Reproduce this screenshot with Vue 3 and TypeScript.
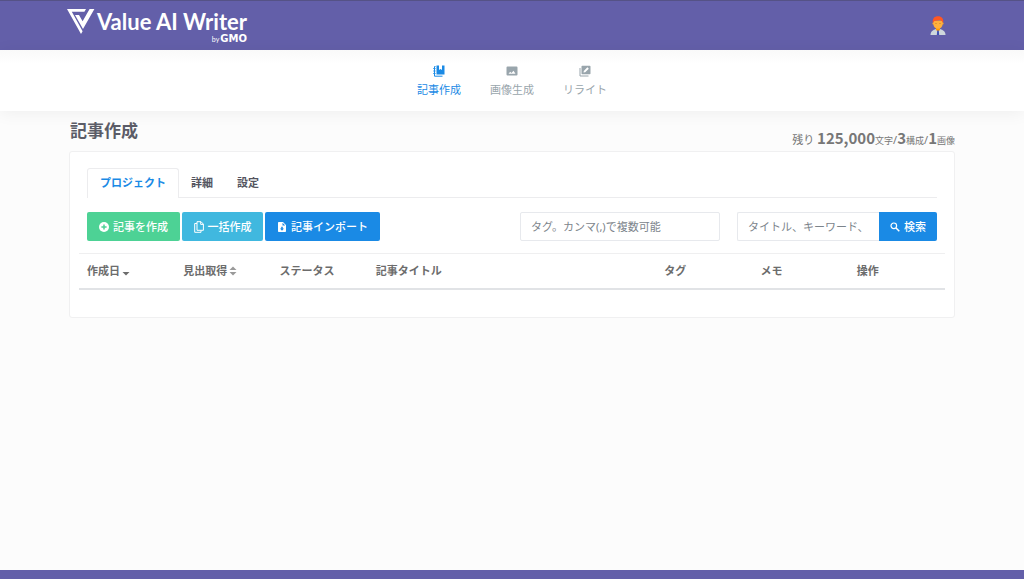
<script setup lang="ts">
import { ref } from 'vue'

interface Column {
  label: string
  span: number
  sort?: 'desc' | 'both'
}

const navItems = ['記事作成', '画像生成', 'リライト']
const tabs = ['プロジェクト', '詳細', '設定']
const columns: Column[] = [
  { label: '作成日', span: 1, sort: 'desc' },
  { label: '見出取得', span: 1, sort: 'both' },
  { label: 'ステータス', span: 1 },
  { label: '記事タイトル', span: 3 },
  { label: 'タグ', span: 1 },
  { label: 'メモ', span: 1 },
  { label: '操作', span: 1 },
]
const activeNav = ref(0)
const activeTab = ref(0)
const tagQuery = ref('')
const titleQuery = ref('')
</script>

<template>
  <div class="page">
    <header class="topbar">
      <div class="container topbar-inner">
        <a class="brand" href="#">
          <svg class="brand-mark" viewBox="0 0 28 25" aria-hidden="true">
            <path d="M0 0H19L17.4 2.8H4.8L15.6 22.2L14 25Z" fill="#fff" />
            <path d="M8 6H12L15.6 12.2L22.6 0H27.4L16 20Z" fill="#fff" />
          </svg>
          <span class="brand-text">
            <span class="brand-name">Value AI Writer</span>
            <span class="brand-sub">by<b>GMO</b></span>
          </span>
        </a>
        <button class="avatar" type="button" aria-label="アカウント">
          <svg viewBox="0 0 16 20" aria-hidden="true">
            <path d="M0.5 19C0.5 15.5 3 14 6 13H10C13 14 15.5 15.5 15.5 19Z" fill="#cfd8dc" />
            <path d="M6 11H10V14L8 15.5L6 14Z" fill="#ff9800" />
            <path d="M7.2 14.5H8.8L9.2 19H6.8Z" fill="#3f51b5" />
            <circle cx="3.4" cy="7.4" r="1" fill="#ffa726" />
            <circle cx="12.6" cy="7.4" r="1" fill="#ffa726" />
            <path d="M3.4 4.5H12.6V8C12.6 11 10.6 12.8 8 12.8S3.4 11 3.4 8Z" fill="#ffb03c" />
            <path d="M2.8 6.8C2.4 2.3 4.6 0.3 8 0.3C11.8 0.3 13.7 2.6 13.2 6.8L12 5.2L10 4L4.4 5Z" fill="#ff5722" />
            <circle cx="6" cy="7.5" r="0.5" fill="#b0702a" />
            <circle cx="10" cy="7.5" r="0.5" fill="#b0702a" />
          </svg>
        </button>
      </div>
    </header>

    <nav class="mainnav">
      <a
        v-for="(item, i) in navItems"
        :key="item"
        href="#"
        :class="{ active: activeNav === i }"
        @click.prevent="activeNav = i"
      >
        <svg v-if="i === 0" viewBox="0 0 12 12" aria-hidden="true">
          <path d="M3.5 0.5H6V5L7.5 4L9 5V0.5H11.5V9.5H3.5Z" fill="currentColor" />
          <path d="M2.5 1.5H1.5V11.2H9.5M0.3 3.5H2.5M0.3 6H2.5M0.3 8.5H2.5" fill="none" stroke="currentColor" />
        </svg>
        <svg v-else-if="i === 1" viewBox="0 0 12 12" aria-hidden="true">
          <path
            fill-rule="evenodd"
            d="M1.5 1.5H10.5Q11.5 1.5 11.5 2.5V9.5Q11.5 10.5 10.5 10.5H1.5Q0.5 10.5 0.5 9.5V2.5Q0.5 1.5 1.5 1.5ZM2.5 8.8H9.5L7.5 5.8L5.5 8L4.2 6.7Z"
            fill="currentColor"
          />
        </svg>
        <svg v-else viewBox="0 0 12 12" aria-hidden="true">
          <path
            fill-rule="evenodd"
            d="M3.3 0.8H10.7Q11.5 0.8 11.5 1.6V8.4Q11.5 9.2 10.7 9.2H3.3Q2.5 9.2 2.5 8.4V1.6Q2.5 0.8 3.3 0.8ZM4.5 7.6L6.2 7.3L9.8 3.7L8.4 2.3L4.8 5.9Z"
            fill="currentColor"
          />
          <path d="M1 3V11H9.5" fill="none" stroke="currentColor" />
        </svg>
        <span>{{ item }}</span>
      </a>
    </nav>

    <main class="container main">
      <div class="heading">
        <h1>記事作成</h1>
        <p class="quota">
          残り <b>125,000</b><small>文字</small>/<b>3</b><small>構成</small>/<b>1</b><small>画像</small>
        </p>
      </div>

      <section class="card">
        <div class="tabs" role="tablist">
          <button
            v-for="(tab, i) in tabs"
            :key="tab"
            type="button"
            role="tab"
            :aria-selected="activeTab === i"
            :class="{ active: activeTab === i }"
            @click="activeTab = i"
          >
            {{ tab }}
          </button>
        </div>

        <div class="toolbar">
          <button class="btn green" type="button">
            <svg viewBox="0 0 10 10" aria-hidden="true">
              <circle cx="5" cy="5" r="5" fill="#fff" />
              <path d="M5 2.4V7.6M2.4 5H7.6" stroke="#4dd295" stroke-width="1.5" />
            </svg>
            記事を作成
          </button>
          <button class="btn cyan" type="button">
            <svg class="tall" viewBox="0 0 10 12" aria-hidden="true">
              <path
                d="M3 0.7H7L9.4 3.1V9.3H3ZM6.7 0.7V3.4H9.4M3 2.5H0.7V11.3H7V9.5"
                fill="none"
                stroke="#fff"
              />
            </svg>
            一括作成
          </button>
          <button class="btn blue" type="button">
            <svg viewBox="0 0 10 10" aria-hidden="true">
              <path
                fill-rule="evenodd"
                d="M1.8 0H6L9 3V9.2Q9 10 8.2 10H1.8Q1 10 1 9.2V0.8Q1 0 1.8 0ZM5.5 0.8V3.5H8.2ZM4.2 4.7V6.5H3L5 8.7L7 6.5H5.8V4.7Z"
                fill="#fff"
              />
            </svg>
            記事インポート
          </button>

          <form class="filters" @submit.prevent>
            <input
              v-model="tagQuery"
              class="tag-input"
              type="text"
              aria-label="タグ"
              placeholder="タグ。カンマ(,)で複数可能"
            />
            <div class="search">
              <input
                v-model="titleQuery"
                type="text"
                aria-label="タイトル、キーワード"
                placeholder="タイトル、キーワード、"
              />
              <button class="btn blue" type="submit">
                <svg viewBox="0 0 10 10" aria-hidden="true">
                  <circle cx="3.8" cy="3.8" r="2.8" fill="none" stroke="#fff" stroke-width="1.2" />
                  <path d="M6 6L9.3 9.3" stroke="#fff" stroke-width="1.5" />
                </svg>
                検索
              </button>
            </div>
          </form>
        </div>

        <table>
          <colgroup>
            <col v-for="c in columns" :key="c.label" :class="{ wide: c.span > 1 }" />
          </colgroup>
          <thead>
            <tr>
              <th v-for="c in columns" :key="c.label" scope="col">
                {{ c.label }}<svg v-if="c.sort" viewBox="0 0 8 10" aria-hidden="true">
                  <path v-if="c.sort === 'both'" d="M0.5 4L4 0.5L7.5 4Z" fill="#999" />
                  <path
                    d="M0.5 6L4 9.5L7.5 6Z"
                    :fill="c.sort === 'both' ? '#999' : '#6c6c6c'"
                  />
                </svg>
              </th>
            </tr>
          </thead>
        </table>
      </section>
    </main>

    <footer class="footer"></footer>
  </div>
</template>

<style>
body {
  margin: 0;
  background: #fcfcfc;
}
</style>

<style scoped>
.page {
  display: flex;
  flex-direction: column;
  min-height: 100vh;
  font-family: 'Noto Sans', 'Noto Sans CJK JP', sans-serif;
  font-size: 11px;
  line-height: 16px;
  color: #6c6c6c;
}
.page *,
.page {
  box-sizing: border-box;
}
button,
input {
  font: inherit;
}
button {
  cursor: pointer;
}
a {
  text-decoration: none;
}
.container {
  width: 100%;
  max-width: 886px;
  margin: 0 auto;
}
.topbar {
  background: #635fa9;
  border-top: 1px solid #555286;
}
.topbar-inner {
  display: flex;
  justify-content: space-between;
  align-items: center;
  height: 49px;
  padding-right: 9px;
}
.brand {
  display: flex;
  align-items: flex-start;
  gap: 2px;
  margin-left: -2px;
  color: #fff;
  font-family: Lato, sans-serif;
}
.brand-mark {
  width: 28px;
  height: 25px;
}
.brand-text {
  display: flex;
  flex-direction: column;
  align-items: flex-end;
}
.brand-name {
  font-size: 22px;
  font-weight: 700;
  line-height: 26px;
}
.brand-sub {
  display: flex;
  align-items: baseline;
  gap: 1px;
  font-size: 7px;
  line-height: 8px;
}
.brand-sub b {
  font-family: 'DejaVu Sans', sans-serif;
  font-size: 10px;
}
.avatar {
  width: 16px;
  height: 20px;
  padding: 0;
  border: 0;
  background: none;
}
.avatar svg {
  display: block;
  width: 16px;
  height: 20px;
}
.mainnav {
  display: flex;
  justify-content: center;
  gap: 29px;
  height: 61px;
  padding-top: 15px;
  background: linear-gradient(#f9f9f9, #fff 14px);
  box-shadow: 0 2px 16px rgba(0, 0, 0, 0.06);
}
.mainnav a {
  display: flex;
  flex-direction: column;
  align-items: center;
  gap: 5px;
  width: 44px;
  color: #99a5ac;
  white-space: nowrap;
}
.mainnav a.active {
  color: #1a8ae5;
}
.mainnav svg {
  width: 12px;
  height: 12px;
}
.main {
  flex: 1;
  padding-bottom: 24px;
}
.heading {
  display: flex;
  justify-content: space-between;
  align-items: flex-end;
  height: 40px;
}
h1 {
  margin: 0 0 8px 1px;
  font-size: 17px;
  line-height: 24px;
  color: #5b5c67;
}
.quota {
  margin: 0;
  font-size: 11px;
  line-height: 20px;
  color: #777;
}
.quota b {
  font-family: 'Noto Sans CJK JP', sans-serif;
  font-size: 15px;
}
.quota small {
  font-size: 9px;
}
.card {
  min-height: 167px;
  padding: 16px 9px;
  background: #fff;
  border: 1px solid #f0f0f1;
  border-radius: 3px;
}
.tabs {
  display: flex;
  margin: 0 8px;
  border-bottom: 1px solid #ececee;
}
.tabs button {
  height: 30px;
  margin-bottom: -1px;
  padding: 0 11px 1px;
  border: 1px solid transparent;
  border-bottom: 0;
  border-radius: 3px 3px 0 0;
  background: none;
  font-weight: 700;
  color: #54555f;
}
.tabs .active {
  padding: 0 12px 1px;
  border-color: #ececee;
  background: #fff;
  color: #1a8ae5;
}
.toolbar {
  display: flex;
  gap: 2px;
  margin: 14px 8px 12px;
}
.btn {
  display: flex;
  justify-content: center;
  align-items: center;
  gap: 4px;
  height: 29px;
  padding: 0 11px;
  border: 0;
  border-radius: 2px;
  color: #fff;
  font-weight: 500;
  white-space: nowrap;
}
.btn svg {
  width: 10px;
  height: 10px;
}
.btn .tall {
  height: 12px;
}
.green {
  width: 93px;
  background: #4dd295;
}
.cyan {
  width: 81px;
  background: #40b8df;
}
.blue {
  width: 115px;
  background: #1a8ae5;
}
.filters {
  display: flex;
  gap: 17px;
  margin-left: auto;
}
input {
  height: 29px;
  padding: 0 10px 1px;
  border: 1px solid #e7e9ed;
  border-radius: 2px;
  background: #fff;
  color: #555;
}
input::placeholder {
  color: #7c848b;
  opacity: 1;
}
.tag-input {
  width: 200px;
}
.search {
  display: flex;
}
.search input {
  width: 142px;
  border-right: 0;
  border-radius: 2px 0 0 2px;
}
.search .btn {
  width: 58px;
  border-radius: 0 2px 2px 0;
}
table {
  width: 100%;
  table-layout: fixed;
  border-collapse: collapse;
}
col {
  width: 11%;
}
col.wide {
  width: 33%;
}
th {
  height: 35px;
  padding: 0 8px;
  border-top: 1px solid #efeff0;
  border-bottom: 2px solid #e1e3e6;
  text-align: left;
  font-weight: 700;
  white-space: nowrap;
}
th svg {
  width: 8px;
  height: 10px;
  margin-left: 2px;
  vertical-align: -1px;
}
.footer {
  height: 9px;
  background: #635fa9;
}
</style>
